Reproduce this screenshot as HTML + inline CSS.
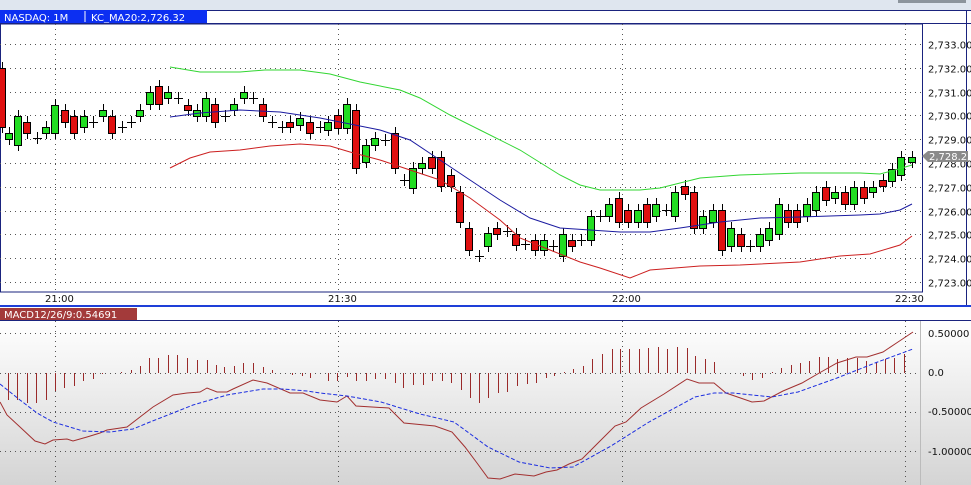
<!DOCTYPE html>
<html><head><meta charset="utf-8"><style>
html,body{margin:0;padding:0;width:971px;height:485px;overflow:hidden;background:#fff;font-family:Tahoma,"DejaVu Sans","Liberation Sans",sans-serif}
svg{display:block}
</style></head><body>
<svg id="s" width="971" height="485" xmlns="http://www.w3.org/2000/svg" font-family="DejaVu Sans, Liberation Sans, sans-serif">
<defs><linearGradient id="g" x1="0" y1="0" x2="0" y2="1"><stop offset="0" stop-color="#ffffff"/><stop offset="1" stop-color="#d4d4d4"/></linearGradient></defs>
<rect x="0" y="0" width="971" height="10" fill="#dfe6ef"/>
<rect x="898" y="0" width="68" height="3" fill="#8c949c"/>
<rect x="0" y="10" width="971" height="14" fill="#fff"/>
<rect x="0" y="10" width="207" height="13" fill="#0c2ff2"/>
<line x1="85" y1="11" x2="85" y2="22" stroke="#fff"/>
<text x="4" y="21" font-size="10" fill="#fff">NASDAQ: 1M</text>
<text x="91" y="21" font-size="10" fill="#fff">KC_MA20:2,726.32</text>
<line x1="207" y1="10.5" x2="971" y2="10.5" stroke="#1a237e"/>
<line x1="0" y1="23.5" x2="971" y2="23.5" stroke="#1a237e"/>
<line x1="966.5" y1="10" x2="966.5" y2="306" stroke="#1a237e"/>
<rect x="0.5" y="24" width="922" height="268" fill="none" stroke="#1a237e"/>
<g id="grid" stroke="#555" stroke-dasharray="1,4"></g>
<g id="c"></g>
<polyline fill="none" stroke="#32d632" points="170,67 200,72 240,72 265,70 300,70 330,74 360,82 400,90 420,98 450,115 480,130 520,150 560,175 580,185 600,190 640,190 660,188 700,178 740,175 800,173 860,173 880,174 895,170 912,165"/>
<polyline fill="none" stroke="#1a1aa0" points="170,117 200,113 240,110 280,112 320,118 350,124 380,130 410,140 440,160 470,180 500,200 530,218 560,228 590,230 620,232 650,232 680,228 720,222 760,218 800,217 860,215 880,214 900,210 912,204"/>
<polyline fill="none" stroke="#cc2020" points="170,168 190,158 210,152 240,150 270,146 300,144 330,146 350,152 380,160 410,170 440,180 470,198 500,220 520,238 550,250 580,262 600,268 630,278 650,270 700,266 740,265 800,262 840,256 870,254 900,245 912,236"/>
<g font-size="10" fill="#111" id="ax"></g>
<polygon points="922,156 928,151 968,151 968,162 928,162" fill="#8a8a8a"/>
<text x="929" y="160" font-size="10" fill="#fff">2,728.25</text>
<g font-size="10" fill="#111">
<text x="45" y="302">21:00</text><text x="328" y="302">21:30</text><text x="612" y="302">22:00</text><text x="895" y="302">22:30</text></g>
<rect x="0" y="305" width="971" height="2" fill="#1e3fd8"/>
<rect x="0" y="308" width="971" height="13" fill="#fff"/>
<rect x="0" y="308" width="137" height="12" fill="#a33a3a"/>
<text x="4" y="318" font-size="10" fill="#fff">MACD12/26/9:0.54691</text>
<line x1="0" y1="320.5" x2="971" y2="320.5" stroke="#1a237e"/>
<rect x="0" y="321" width="971" height="164" fill="url(#g)"/>
<line x1="920.5" y1="321" x2="920.5" y2="485" stroke="#bbb"/>
<g id="grid2" stroke="#555" stroke-dasharray="1,4"></g>
<g id="h" stroke="#9a2a2a"></g>
<polyline fill="none" stroke="#a23030" points="0,402 7,415 20,427 35,441 45,444 53,440 67,439 73,441 87,437 100,433 107,430 127,427 140,417 153,407 173,395 187,393 200,392 207,388 217,392 227,392 233,389 253,380 267,383 290,393 303,393 320,400 337,402 347,396 356,406 389,408 404,423 435,426 452,432 465,447 477,463 488,478 500,479 515,474 534,476 546,472 557,470 569,464 582,459 596,445 615,426 626,422 641,408 664,394 687,379 699,383 714,383 726,393 752,402 764,401 783,391 802,383 821,372 837,363 856,357 867,357 883,352 898,342 913,332"/>
<polyline fill="none" stroke="#1c2ee0" stroke-dasharray="4,2" points="0,384 20,400 37,413 53,422 83,431 110,432 133,429 150,422 173,413 193,405 227,395 263,389 283,389 307,391 320,393 347,396 381,402 420,414 454,422 488,447 519,462 550,468 573,467 611,446 649,422 695,397 714,393 733,393 772,397 798,392 837,378 875,363 913,349"/>
<g font-size="10" fill="#111"><text x="928" y="337">0.50000</text><text x="928" y="376">0.0</text><text x="928" y="415">-0.50000</text><text x="928" y="455">-1.00000</text></g>
</svg>
<script>
var NS="http://www.w3.org/2000/svg";
function el(p,t,a){var e=document.createElementNS(NS,t);for(var k in a)e.setAttribute(k,a[k]);p.appendChild(e);return e;}
var grid=document.getElementById('grid'),ax=document.getElementById('ax');
for(var i=0;i<11;i++){var y=Math.round(44+i*23.8)+.5;el(grid,'line',{x1:0,y1:y,x2:922,y2:y});var t=el(ax,'text',{x:928,y:y+4});t.textContent='2,7'+(33-i)+'.00';}
[55,338,622,905].forEach(function(x){el(grid,'line',{x1:x+.5,y1:24,x2:x+.5,y2:292});el(document.getElementById('grid2'),'line',{x1:x+.5,y1:321,x2:x+.5,y2:485});});
var g2=document.getElementById('grid2');[333,373,412,451].forEach(function(y){el(g2,'line',{x1:0,y1:y+.5,x2:920,y2:y+.5});});
var C=[[2,68,127],[9,139,133],[18,145,116],[27,122,133],[37,138,138],[46,133,127],[55,133,105],[65,110,122],[74,116,133],[84,127,116],[93,122,122],[103,116,110],[112,116,133],[122,127,127],[131,122,122],[140,116,110],[150,104,92],[159,86,104],[168,98,92],[178,98,98],[188,105,110],[197,116,110],[206,116,98],[215,104,122],[225,116,116],[234,110,104],[244,98,92],[253,98,98],[263,104,116],[272,122,122],[282,127,127],[290,122,127],[300,125,118],[310,122,133],[320,127,127],[328,130,122],[338,115,128],[347,128,104],[356,110,168],[366,162,145],[375,145,138],[385,140,140],[395,133,168],[404,180,180],[413,188,168],[422,168,163],[432,157,168],[441,157,186],[451,175,186],[460,192,222],[469,228,250],[479,256,256],[488,246,233],[497,228,234],[507,231,231],[516,234,245],[525,244,244],[535,240,250],[544,250,240],[553,246,246],[563,256,234],[572,240,246],[581,240,240],[591,240,216],[600,216,216],[609,216,204],[619,198,222],[628,210,222],[638,222,210],[647,204,222],[656,216,204],[666,210,210],[675,216,192],[685,186,194],[694,192,228],[703,228,216],[713,222,210],[722,210,250],[731,246,228],[741,234,246],[750,246,246],[760,246,234],[769,240,228],[779,234,204],[788,210,222],[797,210,222],[807,216,204],[816,210,192],[826,187,200],[835,198,192],[845,192,204],[854,204,187],[864,187,198],[873,192,187],[883,180,186],[892,181,169],[901,175,157],[912,162,157]];
var cg=document.getElementById('c');
C.forEach(function(c){var x=c[0],o=c[1],cl=c[2],t=Math.min(o,cl),b=Math.max(o,cl);
el(cg,'line',{x1:x+.5,y1:t-6,x2:x+.5,y2:b+6,stroke:'#000'});
if(b-t<1){el(cg,'line',{x1:x-4,y1:t+.5,x2:x+5,y2:t+.5,stroke:'#000'});}
else el(cg,'rect',{x:x-3.5,y:t+.5,width:7,height:b-t,fill:cl<o?'#22dd22':'#e01010',stroke:'#000'});});
var H=[[8,-27],[17,-27],[27,-30],[36,-30],[46,-27],[55,-18],[64,-15],[74,-13],[83,-8],[93,-6],[102,-1],[112,0],[121,1],[131,3],[140,7],[149,15],[158,15],[168,18],[177,18],[187,15],[197,13],[207,13],[216,8],[224,6],[234,7],[243,10],[253,10],[263,6],[272,3],[282,0],[292,-2],[302,-3],[310,-5],[328,-8],[337,-8],[347,-4],[356,-8],[366,-8],[375,-6],[385,-6],[395,-10],[403,-15],[413,-12],[423,-12],[432,-8],[442,-8],[451,-10],[461,-17],[470,-25],[479,-30],[488,-25],[498,-20],[507,-19],[517,-13],[527,-11],[536,-10],[546,-5],[554,-3],[564,1],[573,4],[583,7],[592,14],[602,19],[612,24],[620,24],[629,24],[639,24],[648,25],[658,26],[667,24],[677,26],[687,25],[695,17],[705,14],[714,11],[724,0],[733,0],[743,-3],[752,-7],[762,-5],[772,1],[781,5],[791,8],[800,10],[809,12],[819,16],[828,16],[837,14],[847,15],[857,15],[866,12],[876,11],[885,14],[894,15],[904,19]];
var hg=document.getElementById('h');
H.forEach(function(b){var x=b[0]+.5;el(hg,'line',{x1:x,y1:373,x2:x,y2:373-b[1]});});
</script>
</body></html>
